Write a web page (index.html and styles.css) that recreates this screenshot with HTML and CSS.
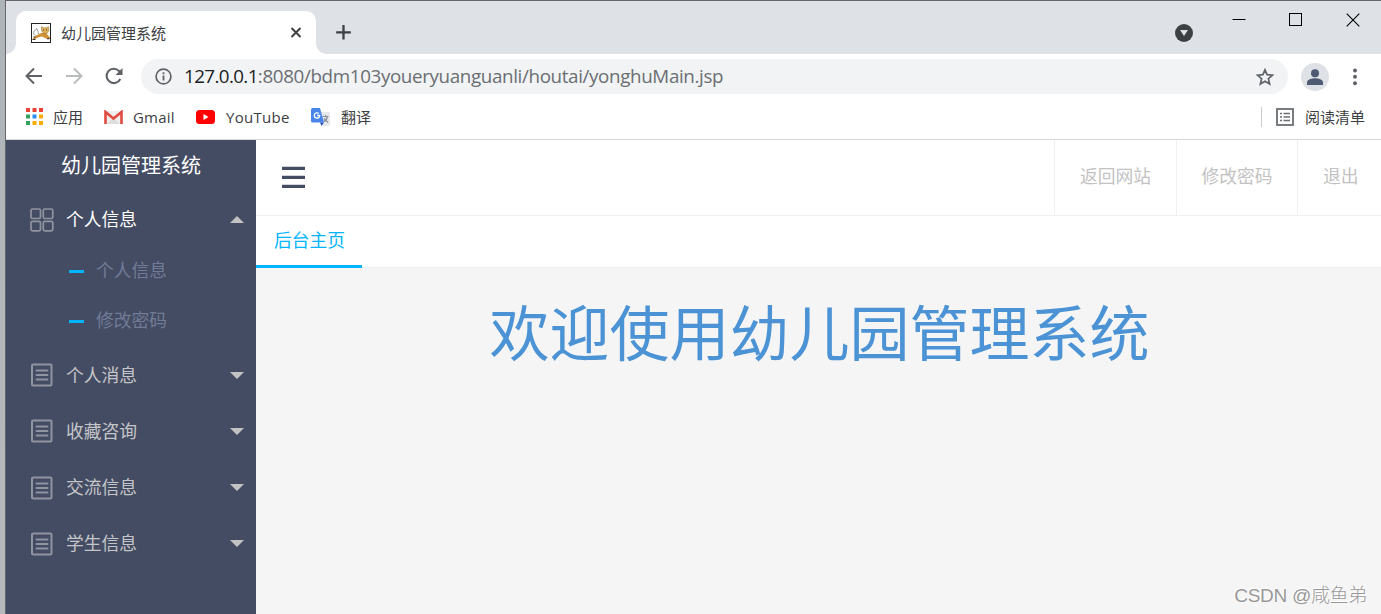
FILE: index.html
```html
<!DOCTYPE html>
<html lang="zh-CN">
<head>
  <meta charset="UTF-8">
  <title>幼儿园管理系统</title>
  <link rel="stylesheet" href="styles.css">
</head>
<body>

  <div class="window">
    <!-- tab strip -->
    <div class="tabstrip">
      <div class="tab">
        <svg class="favicon" width="20" height="20" viewBox="0 0 20 20">
          <rect x=".5" y=".5" width="19" height="19" fill="#fff" stroke="#222"/>
          <path d="M1.500 15.500 6 12l4-2h5l4 4.500v1.500l-4-.5-4-2-4 1-4 2z" fill="#cf9236"/>
          <path d="M10.500 3.500l2 1.200h3l2-1.200.5 4-2 3h-3.500l-2-3z" fill="#dcae55" stroke="#8d7238" stroke-width=".5"/>
          <path d="M7.500 11 7 8 5.500 6.500 3 8 2.500 11l2 1.500M5 5.500l2 1" fill="none" stroke="#999" stroke-width=".9"/>
          <path d="M2.500 14h2M1.500 16.500h3M16 15.800h2.500M12 7h1M15 7h1" stroke="#333" stroke-width="1.100"/>
        </svg>
        <span class="tab-title">幼儿园管理系统</span>
        <svg class="tab-close" width="12" height="12" viewBox="0 0 12 12"><path d="M1.500 1l9 9M10.500 1l-9 9" stroke="#3c4043" stroke-width="2"/></svg>
      </div>
      <svg class="new-tab" width="16" height="16" viewBox="0 0 16 16"><path d="M7.500 1v14.600M.2 8.300h14.600" stroke="#3c4043" stroke-width="2.300"/></svg>
      <svg class="tab-search" width="18" height="18" viewBox="0 0 18 18"><circle cx="9" cy="9" r="9" fill="#3c4043"/><path d="M5 6h8l-4 6z" fill="#dee1e6"/></svg>
      <div class="win-buttons">
        <svg width="14" height="14" viewBox="0 0 14 14"><path d="M.5 6.500h13" stroke="#000"/></svg>
        <svg width="14" height="14" viewBox="0 0 14 14"><rect x=".5" y=".5" width="12" height="12" fill="none" stroke="#000"/></svg>
        <svg width="14" height="14" viewBox="0 0 14 14"><path d="M.7.7l12.600 12.600M13.300.7.7 13.300" stroke="#000" stroke-width="1.100"/></svg>
      </div>
    </div>

    <!-- address bar -->
    <div class="toolbar">
      <div class="nav-buttons">
        <svg width="18" height="18" viewBox="0 0 18 18"><path d="M17 9H2M9 1.500 1.500 9 9 16.500" fill="none" stroke="#5f6368" stroke-width="2"/></svg>
        <svg width="18" height="18" viewBox="0 0 18 18"><path d="M1 9h15M9 1.500 16.500 9 9 16.500" fill="none" stroke="#babcbe" stroke-width="2"/></svg>
        <svg width="18" height="18" viewBox="0 0 18 18"><path d="M15.300 12A7.200 7.200 0 1 1 14 3.900L15.500 5.500" fill="none" stroke="#5f6368" stroke-width="2.100"/><path d="M17.500 1v7h-7z" fill="#5f6368"/></svg>
      </div>
      <div class="omnibox">
        <svg width="17" height="17" viewBox="0 0 17 17"><circle cx="8.500" cy="8.500" r="7.400" fill="none" stroke="#5f6368" stroke-width="1.700"/><path d="M8.500 7.500v5M8.500 4.300v1.900" stroke="#5f6368" stroke-width="1.800"/></svg>
        <span class="url"><span class="host">127.0.0.1</span>:8080/bdm103youeryuanguanli/houtai/yonghuMain.jsp</span>
        <svg class="star" width="18" height="18" viewBox="0 0 18 18"><path d="M9 1.800 11.100 6.700l5.300.5-4 3.500 1.200 5.300L9 13.200 4.400 16l1.200-5.300-4-3.500 5.300-.5z" fill="none" stroke="#5f6368" stroke-width="1.700"/></svg>
      </div>
      <svg class="avatar" width="28" height="28" viewBox="0 0 28 28"><circle cx="14" cy="14" r="14" fill="#dee1e6"/><circle cx="14" cy="10.200" r="4" fill="#4d5a72"/><path d="M6 22v-2.500c0-3 5-4.200 8-4.200s8 1.200 8 4.200V22z" fill="#4d5a72"/></svg>
      <svg class="dots" width="4" height="18" viewBox="0 0 4 18"><g fill="#5f6368"><circle cx="2" cy="2.500" r="2"/><circle cx="2" cy="8.800" r="2"/><circle cx="2" cy="15.200" r="2"/></g></svg>
    </div>

    <!-- bookmarks -->
    <div class="bookmarks">
      <a class="bookmark apps">
        <svg width="17" height="17" viewBox="0 0 17 17"><path d="M0 0h4v4H0zM6.500 0h4v4h-4zM13 0h4v4h-4z" fill="#ea4335"/><path d="M0 6.500h4v4H0zM0 13h4v4H0z" fill="#34a060"/><path d="M6.500 6.500h4v4h-4z" fill="#2d8cf0"/><path d="M13 6.500h4v4h-4zM6.500 13h4v4h-4zM13 13h4v4h-4z" fill="#f9ab00"/></svg>
        <span>应用</span>
      </a>
      <a class="bookmark gmail">
        <svg width="19" height="15" viewBox="0 0 19 15"><path d="M1 1h17v13H1z" fill="#eee"/><path d="M3 14 9.500 8l6.500 6z" fill="#ddd"/><path d="M1.500 14V2l8 6.500 8-6.500v12" fill="none" stroke="#e04a3f" stroke-width="2.600"/></svg>
        <span>Gmail</span>
      </a>
      <a class="bookmark youtube">
        <svg width="19" height="14" viewBox="0 0 19 14"><rect width="19" height="14" rx="3.500" fill="#f00"/><path d="M7.500 4v6l5-3z" fill="#fff"/></svg>
        <span>YouTube</span>
      </a>
      <a class="bookmark translate">
        <svg width="20" height="19" viewBox="0 0 20 19"><path d="M7 4h11q1 0 1 1v12q0 1-1 1h-6z" fill="#e6e8eb"/><path d="M11.500 8.500h6M14.500 7V8.500M16.500 8.500q-1 4-4 5M13 10.500l4 4" fill="none" stroke="#8a9299" stroke-width="1.200"/><path d="M1.500 0H9l4 14.500H1.500Q0 14.500 0 13V1.500Q0 0 1.500 0z" fill="#4a86ea"/><path d="M9 14.500h4L10.500 18z" fill="#2f4fc4"/><path d="M7.800 5.500A2.700 2.700 0 1 0 8.700 7.500H6.200" fill="none" stroke="#fff" stroke-width="1.300"/></svg>
        <span>翻译</span>
      </a>
      <div class="reading-list">
        <svg width="18" height="18" viewBox="0 0 18 18"><rect x="1" y="1" width="16" height="16" fill="none" stroke="#6b6f73" stroke-width="1.800"/><path d="M4 5.500h2M4 9h2M4 12.500h2M7.500 5.500H14M7.500 9H14M7.500 12.500H14" stroke="#6b6f73" stroke-width="1.600"/></svg>
        <span>阅读清单</span>
      </div>
    </div>

    <!-- admin page -->
    <div class="page">
      <div class="sidebar">
        <div class="logo">幼儿园管理系统</div>
        <ul class="menu">
          <li class="menu-item open">
            <svg width="24" height="24" viewBox="0 0 24 24"><g fill="none" stroke="#9094a0" stroke-width="1.700"><rect x="1" y="1" width="9.500" height="9.500" rx="1.500"/><rect x="13.300" y="1" width="9.500" height="9.500" rx="1.500"/><rect x="1" y="13.300" width="9.500" height="9.500" rx="1.500"/><rect x="13.300" y="13.300" width="9.500" height="9.500" rx="1.500"/></g></svg>
            <span>个人信息</span><i class="caret"></i>
          </li>
          <li class="sub-item"><span>个人信息</span></li>
          <li class="sub-item"><span>修改密码</span></li>
          <li class="menu-item">
            <svg width="24" height="24" viewBox="0 0 24 24"><use href="#icon-list"/></svg>
            <span>个人消息</span><i class="caret"></i>
          </li>
          <li class="menu-item">
            <svg width="24" height="24" viewBox="0 0 24 24"><use href="#icon-list"/></svg>
            <span>收藏咨询</span><i class="caret"></i>
          </li>
          <li class="menu-item">
            <svg width="24" height="24" viewBox="0 0 24 24"><use href="#icon-list"/></svg>
            <span>交流信息</span><i class="caret"></i>
          </li>
          <li class="menu-item">
            <svg width="24" height="24" viewBox="0 0 24 24"><use href="#icon-list"/></svg>
            <span>学生信息</span><i class="caret"></i>
          </li>
        </ul>
      </div>

      <div class="main">
        <div class="header">
          <div class="toggle"><i></i><i></i><i></i></div>
          <div class="links">
            <a>返回网站</a>
            <a>修改密码</a>
            <a>退出</a>
          </div>
        </div>
        <div class="page-tabs"><div class="page-tab">后台主页</div></div>
        <div class="content">
          <h1>欢迎使用幼儿园管理系统</h1>
        </div>
      </div>
    </div>
  </div>

  <div class="watermark">CSDN @咸鱼弟</div>

  <svg class="defs" width="0" height="0">
    <symbol id="icon-list" viewBox="0 0 24 24">
      <rect x="2" y="1.500" width="19.500" height="21" rx="1" fill="none" stroke="#9094a0" stroke-width="2"/>
      <path d="M6.500 7.500h11M6.500 12h11M6.500 16.500h11" stroke="#9094a0" stroke-width="2" stroke-linecap="round"/>
    </symbol>
  </svg>

</body>
</html>
```

FILE: styles.css
```css
* {
  box-sizing: border-box;
}
body {
  margin: 0;
  height: 614px;
  overflow: hidden;
  padding-left: 5px;
  background: linear-gradient(#aeb4b8, #b6babd);
  font-family: "Open Sans", "Noto Sans CJK SC", sans-serif;
}
svg {
  display: block;
  flex: none;
}
.window {
  height: 614px;
  display: flex;
  flex-direction: column;
  border-top: 1px solid #66676a;
  border-left: 1px solid #66676a;
  background: #fff;
}

/* browser */
.tabstrip {
  height: 53px;
  flex: none;
  display: flex;
  align-items: flex-end;
  padding-left: 10px;
  background: #dee1e6;
}
.tab {
  position: relative;
  width: 300px;
  height: 43px;
  display: flex;
  align-items: center;
  padding: 0 14px 0 15px;
  border-radius: 10px 10px 0 0;
  background: #fff;
}
.tab::before,
.tab::after {
  content: "";
  position: absolute;
  bottom: 0;
  width: 10px;
  height: 10px;
}
.tab::before {
  left: -10px;
  background: radial-gradient(circle at 0 0, #dee1e6 9.500px, #fff 10px);
}
.tab::after {
  right: -10px;
  background: radial-gradient(circle at 100% 0, #dee1e6 9.500px, #fff 10px);
}
.tab-title {
  margin-left: 10px;
  font-size: 15px;
  color: #3c4043;
}
.tab-close {
  margin-left: auto;
}
.new-tab {
  margin: 0 0 14px 20px;
}
.tab-search {
  margin: 0 0 12px auto;
}
.win-buttons {
  align-self: flex-start;
  display: flex;
  gap: 43px;
  padding: 12px 21px 0 39px;
}
.toolbar {
  height: 45px;
  flex: none;
  display: flex;
  align-items: center;
  padding-left: 19px;
}
.nav-buttons {
  display: flex;
  gap: 22px;
  padding-bottom: 1px;
}
.omnibox {
  width: 1147px;
  height: 35px;
  display: flex;
  align-items: center;
  margin-left: 18px;
  padding: 0 14px;
  border-radius: 18px;
  background: #f1f3f4;
}
.url {
  margin-left: 12px;
  font-size: 18.800px;
  line-height: 35px;
  letter-spacing: -.36px;
  color: #6a6e73;
  white-space: nowrap;
}
.host {
  letter-spacing: -.6px;
  color: #202124;
}
.star {
  margin-left: auto;
}
.avatar {
  margin-left: 13px;
}
.dots {
  margin-left: 24px;
}
.bookmarks {
  height: 41px;
  flex: none;
  display: flex;
  align-items: flex-start;
  padding: 8px 16px 0 20px;
  border-bottom: 1px solid #d6d8db;
  font-size: 15px;
  line-height: 20px;
  color: #3c4043;
}
.bookmark,
.reading-list {
  height: 20px;
  display: flex;
  align-items: center;
}
.apps svg {
  margin-top: -2px;
}
.apps span {
  margin-left: 10px;
}
.gmail {
  margin-left: 21px;
}
.gmail span {
  width: 42px;
  margin-left: 10px;
  letter-spacing: .2px;
}
.youtube {
  margin-left: 21px;
}
.youtube span {
  width: 65px;
  margin-left: 11px;
  letter-spacing: .3px;
}
.translate {
  margin-left: 20px;
}
.translate span {
  margin-left: 10px;
}
.reading-list {
  margin-left: auto;
  padding-left: 14px;
  border-left: 1px solid #c9ccd0;
}
.reading-list span {
  margin-left: 11px;
}

/* admin page */
.page {
  flex: 1;
  display: flex;
  font-size: 17.800px;
}
.sidebar {
  width: 250px;
  flex: none;
  background: #444c63;
}
.logo {
  height: 51px;
  line-height: 51px;
  font-size: 20px;
  text-align: center;
  color: #fff;
}
.menu {
  margin: 0;
  padding: 0;
  list-style: none;
}
.menu-item {
  height: 56.250px;
  display: flex;
  align-items: center;
  padding: 2px 12.500px 0 24px;
  color: #c4c5c8;
}
.menu-item span {
  margin: 0 0 3px 12px;
}
.caret {
  margin-left: auto;
  border: 7.500px solid transparent;
  border-top-color: #c2c2c2;
  border-bottom-width: 0;
}
.open {
  height: 55px;
  color: #fff;
}
.open .caret {
  border-top-width: 0;
  border-bottom: 7.500px solid #c2c2c2;
}
.sub-item {
  height: 50px;
  display: flex;
  align-items: center;
  padding-left: 63px;
  color: #717b96;
}
.sub-item::before {
  content: "";
  width: 15px;
  height: 3px;
  margin-right: 12px;
  background: #00b4ff;
}
.sub-item span {
  margin-bottom: 4px;
}
.main {
  flex: 1;
  background: #f5f5f5;
}
.header {
  height: 76px;
  display: flex;
  justify-content: space-between;
  border-bottom: 1px solid #f0f0f0;
  background: #fff;
}
.toggle {
  display: flex;
  flex-direction: column;
  gap: 5px;
  padding: 26px 0 0 26px;
}
.toggle i {
  width: 23px;
  height: 4px;
  border-top: 1px solid #d3d5da;
  background: #444c63;
}
.links {
  display: flex;
}
.links a {
  width: 121.500px;
  padding-left: 25px;
  border-left: 1px solid #f0f0f0;
  line-height: 73px;
  color: #c2c2c2;
}
.links a:last-child {
  width: 84px;
}
.page-tabs {
  height: 52px;
  border-bottom: 1px solid #eee;
  background: #fff;
}
.page-tab {
  width: 106px;
  height: 52px;
  padding-left: 18px;
  border-bottom: 3px solid #00b4ff;
  line-height: 49px;
  color: #00b4ff;
}
h1 {
  margin: 20px 0 0 2px;
  font-size: 60px;
  font-weight: normal;
  line-height: 90px;
  text-align: center;
  color: #4b93d5;
}
.watermark {
  position: absolute;
  right: 14px;
  bottom: 5px;
  font-family: "Liberation Sans", "Noto Sans CJK SC", sans-serif;
  font-size: 19px;
  font-weight: 300;
  line-height: 26px;
  letter-spacing: -.3px;
  color: #999;
  text-shadow: -1px -1px 0 #fff;
}
.defs {
  position: absolute;
}
```
